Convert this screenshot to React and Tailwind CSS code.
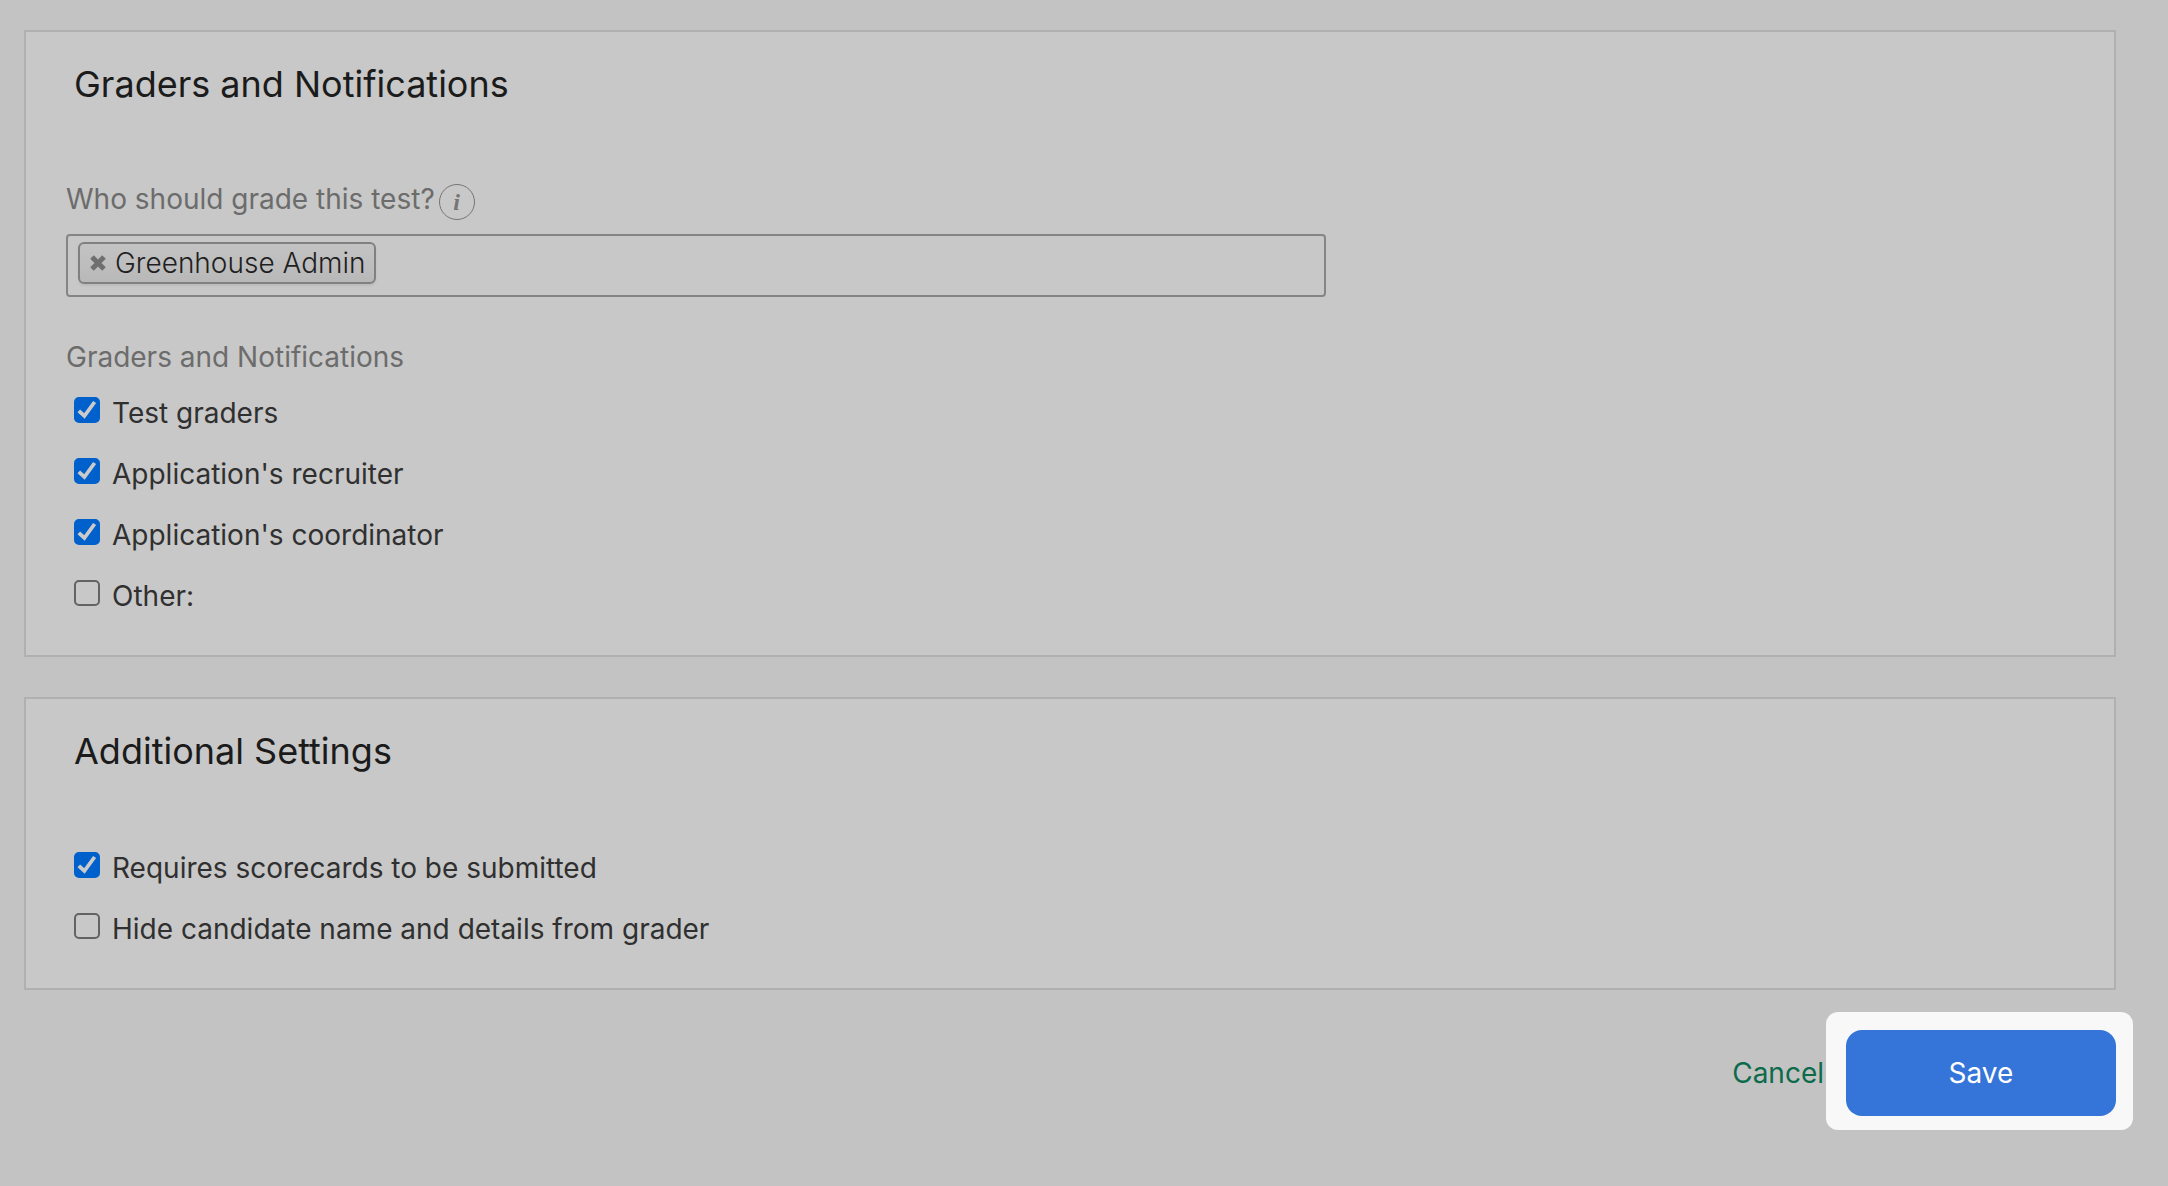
import { useId, useState } from "react";

function CheckRow({ label, defaultChecked = false }) {
  const id = useId();
  return (
    <div className="flex items-baseline gap-3">
      <span className="inline-grid size-[26px] shrink-0">
        <input
          id={id}
          type="checkbox"
          defaultChecked={defaultChecked}
          className="peer col-start-1 row-start-1 size-[26px] appearance-none rounded-[5px] border-2 border-[#636363] checked:border-[#0060cc] checked:bg-[#0060cc]"
        />
        <svg
          viewBox="0 0 26 26"
          aria-hidden="true"
          className="pointer-events-none invisible col-start-1 row-start-1 size-[26px] peer-checked:visible"
        >
          <path d="M4.8 13.8 L10.4 19 L20.6 5" fill="none" stroke="#cbcbcb" strokeWidth="3.8" />
        </svg>
      </span>
      <label htmlFor={id} className="text-[28px] leading-10 text-[#303030]">
        {label}
      </label>
    </div>
  );
}

function Card({ title, children }) {
  return (
    <section className="border-2 border-[#b0b0b0] bg-[#c8c8c8] px-10 pt-[30px] pb-[39px]">
      <h2 className="pl-2 text-[36px] leading-[44px] text-[#1b1b1b]">{title}</h2>
      {children}
    </section>
  );
}

function GraderPicker() {
  const [graders, setGraders] = useState(["Greenhouse Admin"]);
  return (
    <div className="mt-[14px] flex h-[63px] w-full max-w-[1260px] items-start rounded-[4px] border-2 border-[#858585] px-[10px] pt-[6px]">
      {graders.map((name) => (
        <span
          key={name}
          className="flex h-[42px] shrink-0 items-center gap-[9px] rounded-[6px] border-2 border-[#808080] bg-linear-to-b from-[#c3c3c3] via-[#bebebe] to-[#b8b8b8] pr-2 pl-[10px] shadow-[0_2px_2px_#bcbcbc]"
        >
          <button
            type="button"
            aria-label={`Remove ${name}`}
            onClick={() => setGraders(graders.filter((g) => g !== name))}
            className="size-4"
          >
            <svg viewBox="0 0 16 16" className="size-4" aria-hidden="true">
              <path d="M2 2 L14 14 M14 2 L2 14" stroke="#6f6f6f" strokeWidth="5" />
            </svg>
          </button>
          <span className="text-[28px] leading-[38px] font-light text-[#1f1f1f]">{name}</span>
        </span>
      ))}
      <input id="grader-search" type="text" className="h-[42px] min-w-0 flex-1 px-3 text-[28px] outline-none" />
    </div>
  );
}

export default function App() {
  return (
    <main className="min-h-screen bg-[#c3c3c3] pt-[30px] pb-14 font-['Inter',sans-serif]">
      <div className="mr-[52px] ml-6 flex flex-col gap-10">
        <Card title="Graders and Notifications">
          <div className="mt-[72px] flex h-[42px] items-end gap-1">
            <label htmlFor="grader-search" className="self-center text-[28px] leading-10 text-[#6c6c6c]">
              Who should grade this test?
            </label>
            <button
              type="button"
              aria-label="About grading"
              className="flex size-9 items-center justify-center rounded-full border border-[#757575] font-['Liberation_Serif',serif] text-[24px] leading-6 font-bold text-[#757575] italic"
            >
              i
            </button>
          </div>
          <GraderPicker />
          <fieldset className="mt-10">
            <legend className="text-[28px] leading-10 text-[#6c6c6c]">Graders and Notifications</legend>
            <div className="mt-4 flex flex-col gap-[21px] pl-2">
              <CheckRow label="Test graders" defaultChecked />
              <CheckRow label="Application's recruiter" defaultChecked />
              <CheckRow label="Application's coordinator" defaultChecked />
              <CheckRow label="Other:" />
            </div>
          </fieldset>
        </Card>
        <Card title="Additional Settings">
          <div className="mt-[75px] flex flex-col gap-[21px] pl-2">
            <CheckRow label="Requires scorecards to be submitted" defaultChecked />
            <CheckRow label="Hide candidate name and details from grader" />
          </div>
        </Card>
      </div>
      <footer className="mt-[22px] mr-[35px] flex items-center justify-end gap-[2px]">
        <a href="#cancel" className="pt-1 text-[28px] leading-10 text-[#0b6b4b]">
          Cancel
        </a>
        <div className="rounded-[12px] bg-[#f8f8f8] pt-[18px] pr-[17px] pb-[14px] pl-5">
          <button
            type="submit"
            className="h-[86px] w-[270px] rounded-[16px] bg-[#3574d8] text-[28px] leading-10 text-white"
          >
            Save
          </button>
        </div>
      </footer>
    </main>
  );
}
